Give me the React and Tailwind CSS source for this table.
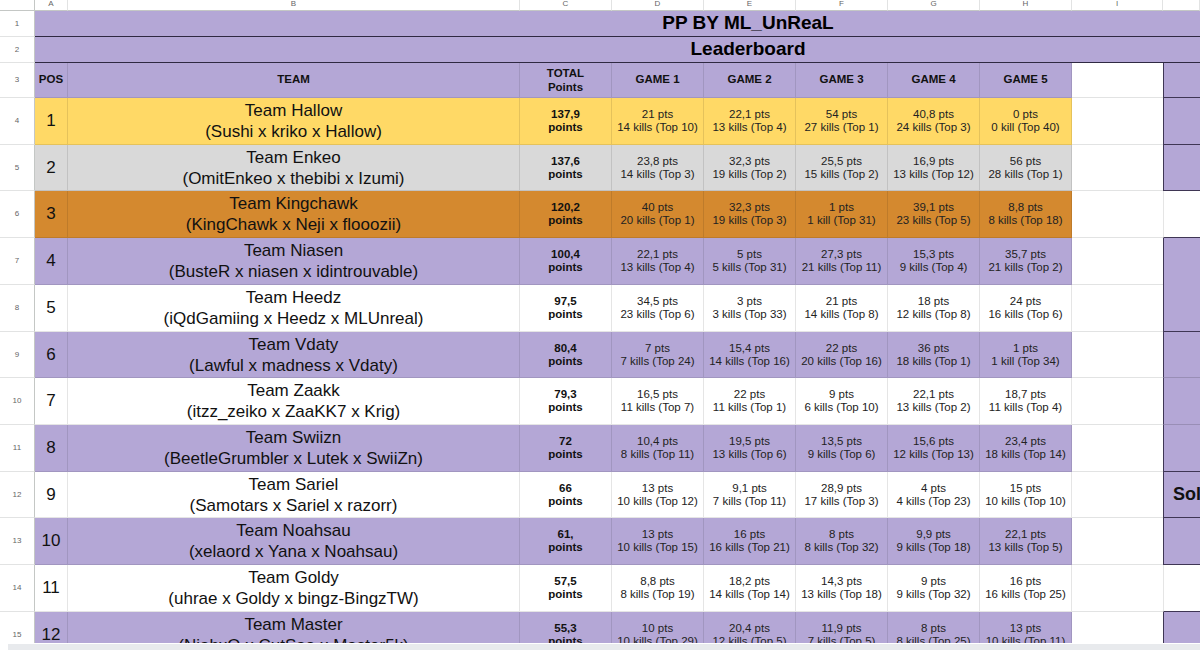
const PURPLE = 'bg-[#b4a7d6]';

const teams = [
  { pos: 1, name: 'Team Hallow', members: '(Sushi x kriko x Hallow)', total: '137,9', bg: 'bg-[#ffd966]', games: ['21 pts|14 kills (Top 10)', '22,1 pts|13 kills (Top 4)', '54 pts|27 kills (Top 1)', '40,8 pts|24 kills (Top 3)', '0 pts|0 kill (Top 40)'] },
  { pos: 2, name: 'Team Enkeo', members: '(OmitEnkeo x thebibi x Izumi)', total: '137,6', bg: 'bg-[#d9d9d9]', games: ['23,8 pts|14 kills (Top 3)', '32,3 pts|19 kills (Top 2)', '25,5 pts|15 kills (Top 2)', '16,9 pts|13 kills (Top 12)', '56 pts|28 kills (Top 1)'] },
  { pos: 3, name: 'Team Kingchawk', members: '(KingChawk x Neji x flooozii)', total: '120,2', bg: 'bg-[#d4892f]', games: ['40 pts|20 kills (Top 1)', '32,3 pts|19 kills (Top 3)', '1 pts|1 kill (Top 31)', '39,1 pts|23 kills (Top 5)', '8,8 pts|8 kills (Top 18)'] },
  { pos: 4, name: 'Team Niasen', members: '(BusteR x niasen x idintrouvable)', total: '100,4', bg: PURPLE, games: ['22,1 pts|13 kills (Top 4)', '5 pts|5 kills (Top 31)', '27,3 pts|21 kills (Top 11)', '15,3 pts|9 kills (Top 4)', '35,7 pts|21 kills (Top 2)'] },
  { pos: 5, name: 'Team Heedz', members: '(iQdGamiing x Heedz x MLUnreal)', total: '97,5', bg: 'bg-white', games: ['34,5 pts|23 kills (Top 6)', '3 pts|3 kills (Top 33)', '21 pts|14 kills (Top 8)', '18 pts|12 kills (Top 8)', '24 pts|16 kills (Top 6)'] },
  { pos: 6, name: 'Team Vdaty', members: '(Lawful x madness x Vdaty)', total: '80,4', bg: PURPLE, games: ['7 pts|7 kills (Top 24)', '15,4 pts|14 kills (Top 16)', '22 pts|20 kills (Top 16)', '36 pts|18 kills (Top 1)', '1 pts|1 kill (Top 34)'] },
  { pos: 7, name: 'Team Zaakk', members: '(itzz_zeiko x ZaaKK7 x Krig)', total: '79,3', bg: 'bg-white', games: ['16,5 pts|11 kills (Top 7)', '22 pts|11 kills (Top 1)', '9 pts|6 kills (Top 10)', '22,1 pts|13 kills (Top 2)', '18,7 pts|11 kills (Top 4)'] },
  { pos: 8, name: 'Team Swiizn', members: '(BeetleGrumbler x Lutek x SwiiZn)', total: '72', bg: PURPLE, games: ['10,4 pts|8 kills (Top 11)', '19,5 pts|13 kills (Top 6)', '13,5 pts|9 kills (Top 6)', '15,6 pts|12 kills (Top 13)', '23,4 pts|18 kills (Top 14)'] },
  { pos: 9, name: 'Team Sariel', members: '(Samotars x Sariel x razorr)', total: '66', bg: 'bg-white', games: ['13 pts|10 kills (Top 12)', '9,1 pts|7 kills (Top 11)', '28,9 pts|17 kills (Top 3)', '4 pts|4 kills (Top 23)', '15 pts|10 kills (Top 10)'] },
  { pos: 10, name: 'Team Noahsau', members: '(xelaord x Yana x Noahsau)', total: '61,', bg: PURPLE, games: ['13 pts|10 kills (Top 15)', '16 pts|16 kills (Top 21)', '8 pts|8 kills (Top 32)', '9,9 pts|9 kills (Top 18)', '22,1 pts|13 kills (Top 5)'] },
  { pos: 11, name: 'Team Goldy', members: '(uhrae x Goldy x bingz-BingzTW)', total: '57,5', bg: 'bg-white', games: ['8,8 pts|8 kills (Top 19)', '18,2 pts|14 kills (Top 14)', '14,3 pts|13 kills (Top 18)', '9 pts|9 kills (Top 32)', '16 pts|16 kills (Top 25)'] },
  { pos: 12, name: 'Team Master', members: '(NiahxQ x CutSaa x Master5k)', total: '55,3', bg: PURPLE, games: ['10 pts|10 kills (Top 29)', '20,4 pts|12 kills (Top 5)', '11,9 pts|7 kills (Top 5)', '8 pts|8 kills (Top 25)', '13 pts|10 kills (Top 11)'] },
];

// right-most column (J): merged blocks with dark outlines
const jCells = {
  4: 'bg-[#b4a7d6] border-l-[#3f3654] border-b-[#3f3654]',
  5: 'bg-[#b4a7d6] border-l-[#3f3654] border-b-[#3f3654]',
  6: 'bg-white border-l-black/10 border-b-[#3f3654]',
  7: 'bg-[#b4a7d6] border-l-[#3f3654] border-b-[#3f3654] row-span-2',
  9: 'bg-[#b4a7d6] border-l-[#3f3654] border-b-black/15',
  10: 'bg-[#b4a7d6] border-l-[#3f3654] border-b-black/15',
  11: 'bg-[#b4a7d6] border-l-[#3f3654] border-b-[#3f3654]',
  12: 'bg-[#b4a7d6] border-l-[#3f3654] border-b-[#3f3654]',
  13: 'bg-[#b4a7d6] border-l-[#3f3654] border-b-[#3f3654]',
  14: 'bg-white border-l-black/10 border-b-[#3f3654]',
  15: 'bg-[#b4a7d6] border-l-[#3f3654] border-b-[#3f3654]',
};

function RowNum({ n }) {
  return (
    <div className="flex items-center justify-center border-r border-b border-r-[#c4c7c5] border-b-[#e2e3e3] bg-white text-[8px] text-[#666]">
      {n}
    </div>
  );
}

function Game({ text }) {
  const [pts, kills] = text.split('|');
  return (
    <div className="flex flex-col items-center justify-center border-r border-b border-black/10 text-[11.5px] leading-[13px] text-[#222] whitespace-nowrap">
      <span>{pts}</span>
      <span>{kills}</span>
    </div>
  );
}

export default function App() {
  const letters = ['A', 'B', 'C', 'D', 'E', 'F', 'G', 'H', 'I', ''];

  return (
    <div className="h-[650px] w-[1200px] overflow-hidden bg-white font-['Liberation_Sans',Arial,sans-serif]">
      <div className="h-[643px] overflow-hidden">
        <div className="grid grid-cols-[35px_33px_452px_92px_92px_92px_92px_92px_92px_91px_37px] grid-rows-[11px_26px_26px_35px_47px_46px_47px_47px_47px_46px_47px_47px_46px_47px_47px_47px]">
          {/* column letters */}
          <div className="border-r border-b border-r-[#c4c7c5] border-b-[#c4c7c5] bg-white" />
          {letters.map((l, i) => (
            <div key={i} className="flex items-start justify-center border-r border-b border-r-[#e2e3e3] border-b-[#c4c7c5] bg-white text-[8px] leading-[8px] text-[#666]">
              {l}
            </div>
          ))}

          {/* title rows */}
          <RowNum n={1} />
          <div className={`col-span-10 flex items-center justify-center pl-[261px] ${PURPLE} border-b border-b-[#2f2942] text-[19px] font-bold text-black`}>
            PP BY ML_UnReaL
          </div>
          <RowNum n={2} />
          <div className={`col-span-10 flex items-center justify-center pl-[261px] ${PURPLE} border-b border-b-[#2f2942] text-[19px] font-bold text-black`}>
            Leaderboard
          </div>

          {/* header row */}
          <RowNum n={3} />
          <div className={`flex items-center justify-center ${PURPLE} border-r border-b border-black/10 text-[11.5px] font-bold text-[#111]`}>POS</div>
          <div className={`flex items-center justify-center ${PURPLE} border-r border-b border-black/10 text-[11.5px] font-bold text-[#111]`}>TEAM</div>
          <div className={`flex flex-col items-center justify-center ${PURPLE} border-r border-b border-black/10 text-[11.5px] leading-[14px] font-bold text-[#111]`}>
            <span>TOTAL</span>
            <span>Points</span>
          </div>
          {['GAME 1', 'GAME 2', 'GAME 3', 'GAME 4', 'GAME 5'].map((g) => (
            <div key={g} className={`flex items-center justify-center ${PURPLE} border-r border-b border-black/10 text-[11.5px] font-bold text-[#111]`}>
              {g}
            </div>
          ))}
          <div className="border-b border-b-[#e2e3e3] bg-white" />
          <div className="border-l border-b border-l-[#3f3654] border-b-[#3f3654] bg-[#b4a7d6]" />

          {/* team rows */}
          {teams.map((t, i) => {
            const row = i + 4;
            return [
              <RowNum key={`n${row}`} n={row} />,
              <div key={`a${row}`} className={`flex items-center justify-center ${t.bg} border-r border-b border-black/10 text-[17px] text-[#111]`}>
                {t.pos}
              </div>,
              <div key={`b${row}`} className={`flex flex-col items-center justify-center ${t.bg} border-r border-b border-black/10 text-[17px] leading-[21px] text-[#111] whitespace-nowrap`}>
                <span>{t.name}</span>
                <span>{t.members}</span>
              </div>,
              <div key={`c${row}`} className={`flex flex-col items-center justify-center ${t.bg} border-r border-b border-black/10 text-[11.5px] leading-[13px] font-bold text-[#111]`}>
                <span>{t.total}</span>
                <span>points</span>
              </div>,
              ...t.games.map((g, k) => (
                <div key={`g${row}${k}`} className={`${t.bg} grid`}>
                  <Game text={g} />
                </div>
              )),
              <div key={`i${row}`} className="border-b border-b-[#e2e3e3] bg-white" />,
              jCells[row] ? (
                <div key={`j${row}`} className={`flex items-center overflow-hidden whitespace-nowrap border-l border-b pl-[9px] text-[18px] font-bold text-[#111] ${jCells[row]}`}>
                  {row === 12 ? 'Solo' : ''}
                </div>
              ) : null,
            ];
          })}
        </div>
      </div>
      <div className="flex h-[7px] bg-white pl-[8px] pt-[1px]">
        <div className="flex-1 bg-[#e8eaed]" />
      </div>
    </div>
  );
}
